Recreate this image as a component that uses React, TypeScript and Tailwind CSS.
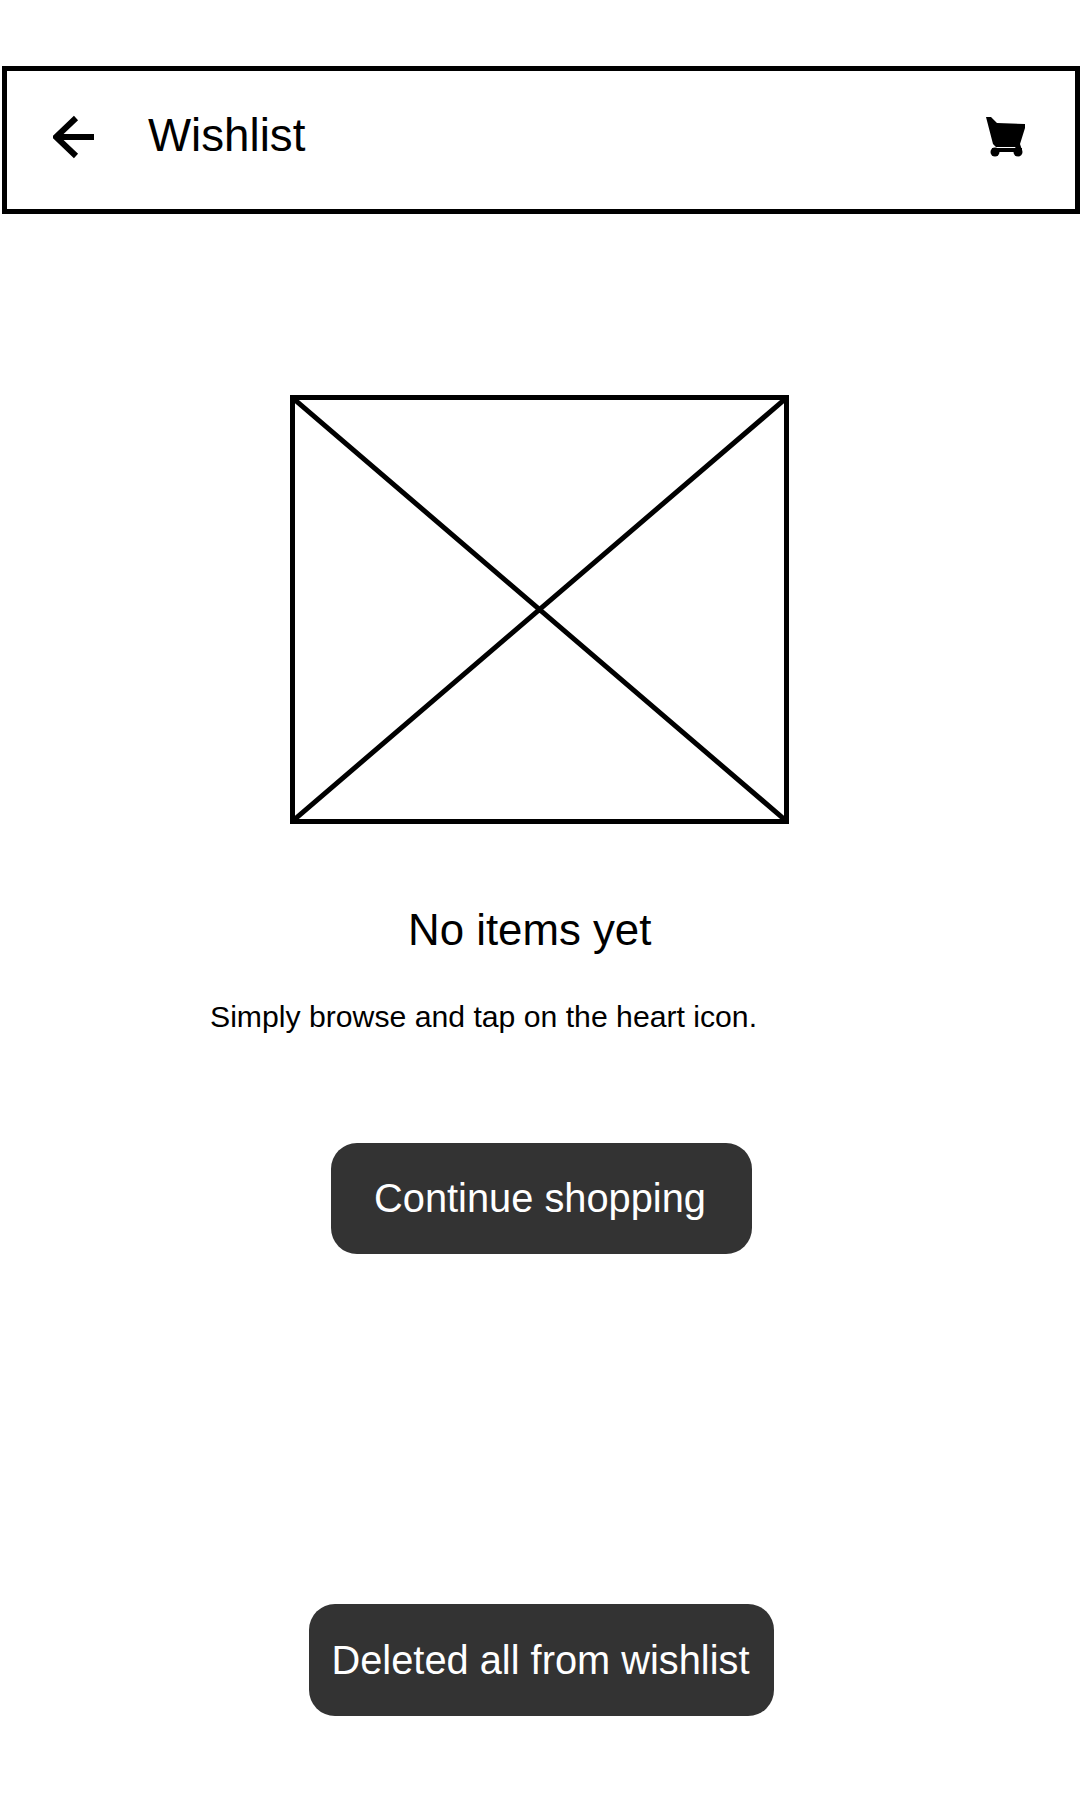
const FONT = "font-['Liberation_Sans',Arial,sans-serif]";

function BackArrow() {
  return (
    <svg width="44" height="44" viewBox="0 0 44 44" fill="none" stroke="#000" strokeWidth="6">
      <path d="M2 22H41" />
      <path d="M23 3L3 22L23 41" />
    </svg>
  );
}

function CartIcon() {
  return (
    <svg width="40" height="40" viewBox="0 0 40 40" fill="#000">
      <path d="M0 0H5L11 6L39 7V11L34 27H7Z" />
      <path d="M7 27H34L36 33H31L29 30H10Z" />
      <rect x="6" y="31" width="30" height="4" />
      <circle cx="9" cy="35" r="4.5" />
      <circle cx="32" cy="35" r="4.5" />
    </svg>
  );
}

function Placeholder() {
  return (
    <div className="ml-[290px] mt-[181px] h-[429px] w-[499px] border-[5px] border-black">
      <svg className="h-full w-full" viewBox="0 0 489 419" preserveAspectRatio="none">
        <path d="M0 0L489 419M489 0L0 419" stroke="#000" strokeWidth="5" fill="none" />
      </svg>
    </div>
  );
}

export default function App() {
  return (
    <div className={`${FONT} min-h-[1800px] bg-white pt-[66px] text-black`}>
      <header className="ml-[2px] flex h-[148px] w-[1078px] items-center border-[5px] border-black pb-[6px] pl-[46px] pr-[49px]">
        <BackArrow />
        <h1 className="mb-[2px] ml-[51px] text-[45.7px] leading-none">Wishlist</h1>
        <div className="ml-auto">
          <CartIcon />
        </div>
      </header>

      <Placeholder />

      <p className="ml-[408px] mt-[81px] text-[43.8px] leading-[50px]">No items yet</p>
      <p className="ml-[210px] mt-[44px] text-[30.2px] leading-[36px]">Simply browse and tap on the heart icon.</p>

      <button className="ml-[331px] mt-[108px] flex h-[111px] w-[421px] items-center justify-center rounded-[26px] bg-[#333333] pr-[3px] text-[39.8px] text-white">
        Continue shopping
      </button>

      <button className="ml-[309px] mt-[350px] flex h-[112px] w-[465px] items-center justify-center rounded-[26px] bg-[#333333] pr-[2px] pt-[2px] text-[39.8px] text-white">
        Deleted all from wishlist
      </button>
    </div>
  );
}
